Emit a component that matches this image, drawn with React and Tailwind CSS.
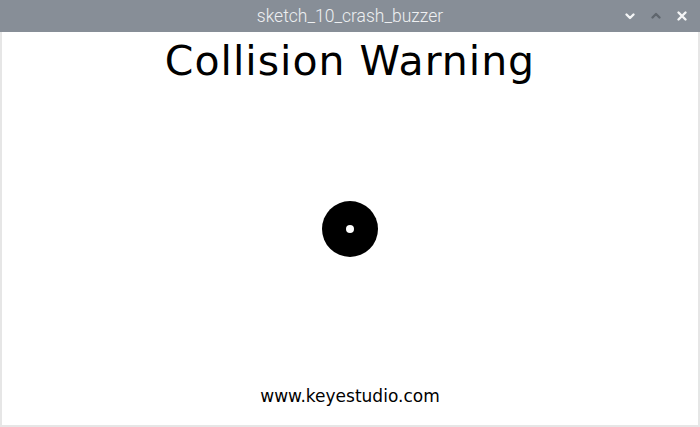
import React from "react";

const TitleBar = () => {
    return (
        <div className="relative h-8 bg-[#878e97] flex items-center justify-center">
            <span className="text-[17.5px] text-[#eef0f2] font-['Roboto',sans-serif] font-light">
                sketch_10_crash_buzzer
            </span>
            <div className="absolute right-[12px] top-0 h-8 flex items-center gap-[14px]">
                {/* minimise */}
                <svg className="w-[12px] h-[12px]" viewBox="0 0 12 12" fill="none" stroke="#f4f5f6" strokeWidth="2.4" strokeLinecap="round" strokeLinejoin="round">
                    <path d="M2.5 4.5 L6 8 L9.5 4.5" />
                </svg>
                {/* maximise (disabled) */}
                <svg className="w-[12px] h-[12px]" viewBox="0 0 12 12" fill="none" stroke="#5f666d" strokeWidth="2.4" strokeLinecap="round" strokeLinejoin="round">
                    <path d="M2.5 7.5 L6 4 L9.5 7.5" />
                </svg>
                {/* close */}
                <svg className="w-[12px] h-[12px]" viewBox="0 0 12 12" fill="none" stroke="#f4f5f6" strokeWidth="2.4" strokeLinecap="round">
                    <path d="M2.5 2.5 L9.5 9.5 M9.5 2.5 L2.5 9.5" />
                </svg>
            </div>
        </div>
    );
}

export default function App() {
    return (
        <div className="w-[700px] h-[427px] overflow-hidden bg-white">
            <TitleBar />
            <div className="h-[395px] flex flex-col items-center border-l-2 border-r-2 border-b-2 border-[#e6e6e6] font-['DejaVu_Sans',sans-serif] text-black">
                <h1 className="mt-[9px] text-[41px] leading-none tracking-[1px]">Collision Warning</h1>
                <div className="mt-[119px] w-[56px] h-[56px] rounded-full bg-black flex items-center justify-center">
                    <div className="w-[8px] h-[8px] rounded-full bg-white" />
                </div>
                <p className="mt-[131px] text-[17px] leading-none">www.keyestudio.com</p>
            </div>
        </div>
    );
}
